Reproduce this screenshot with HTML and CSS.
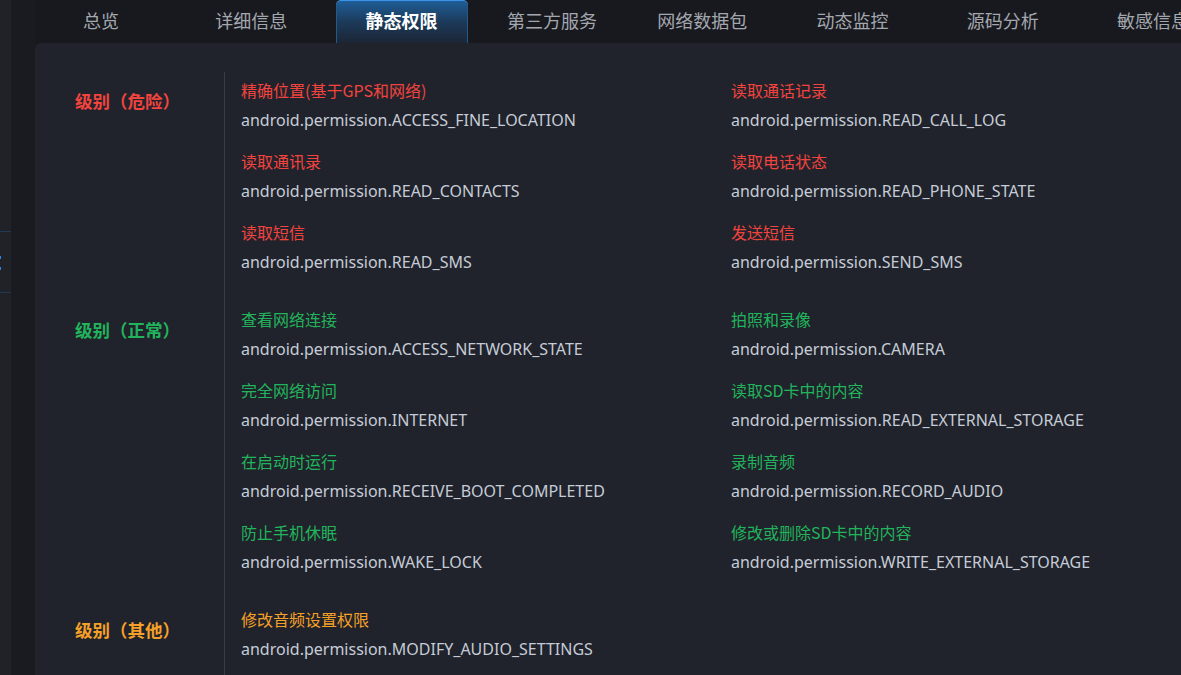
FILE: index.html
```html
<!DOCTYPE html>
<html lang="zh-CN">
<head>
<meta charset="utf-8">
<title>静态权限</title>
<link rel="stylesheet" href="styles.css">
</head>
<body>
<div class="app">
  <div class="rail">
    <div class="rail-line rail-line-top"></div>
    <div class="rail-dot"></div>
    <div class="rail-dot"></div>
    <div class="rail-line rail-line-bottom"></div>
  </div>
  <div class="gutter"></div>
  <div class="main">
    <nav class="tabs">
      <div class="tab">总览</div>
      <div class="tab">详细信息</div>
      <div class="tab active">静态权限</div>
      <div class="tab">第三方服务</div>
      <div class="tab">网络数据包</div>
      <div class="tab">动态监控</div>
      <div class="tab">源码分析</div>
      <div class="tab">敏感信息</div>
    </nav>
    <div class="panel">
      <section class="level danger">
        <div class="level-label">级别（危险）</div>
        <div class="items">
          <div class="item"><div class="title">精确位置(基于GPS和网络)</div><div class="value">android.permission.ACCESS_FINE_LOCATION</div></div>
          <div class="item"><div class="title">读取通话记录</div><div class="value">android.permission.READ_CALL_LOG</div></div>
          <div class="item"><div class="title">读取通讯录</div><div class="value">android.permission.READ_CONTACTS</div></div>
          <div class="item"><div class="title">读取电话状态</div><div class="value">android.permission.READ_PHONE_STATE</div></div>
          <div class="item"><div class="title">读取短信</div><div class="value">android.permission.READ_SMS</div></div>
          <div class="item"><div class="title">发送短信</div><div class="value">android.permission.SEND_SMS</div></div>
        </div>
      </section>
      <section class="level normal">
        <div class="level-label">级别（正常）</div>
        <div class="items">
          <div class="item"><div class="title">查看网络连接</div><div class="value">android.permission.ACCESS_NETWORK_STATE</div></div>
          <div class="item"><div class="title">拍照和录像</div><div class="value">android.permission.CAMERA</div></div>
          <div class="item"><div class="title">完全网络访问</div><div class="value">android.permission.INTERNET</div></div>
          <div class="item"><div class="title">读取SD卡中的内容</div><div class="value">android.permission.READ_EXTERNAL_STORAGE</div></div>
          <div class="item"><div class="title">在启动时运行</div><div class="value">android.permission.RECEIVE_BOOT_COMPLETED</div></div>
          <div class="item"><div class="title">录制音频</div><div class="value">android.permission.RECORD_AUDIO</div></div>
          <div class="item"><div class="title">防止手机休眠</div><div class="value">android.permission.WAKE_LOCK</div></div>
          <div class="item"><div class="title">修改或删除SD卡中的内容</div><div class="value">android.permission.WRITE_EXTERNAL_STORAGE</div></div>
        </div>
      </section>
      <section class="level other">
        <div class="level-label">级别（其他）</div>
        <div class="items">
          <div class="item"><div class="title">修改音频设置权限</div><div class="value">android.permission.MODIFY_AUDIO_SETTINGS</div></div>
        </div>
      </section>
    </div>
  </div>
</div>
</body>
</html>
```

FILE: styles.css
```css
* { box-sizing: border-box; }
html, body {
  margin: 0;
  padding: 0;
  height: 100%;
  overflow: hidden;
  background: #18191e;
  font-family: "Noto Sans", "Noto Sans CJK SC", sans-serif;
}
.app {
  display: flex;
  height: 675px;
}
.rail {
  width: 11px;
  flex: none;
  background: #202228;
  padding-top: 231px;
  display: flex;
  flex-direction: column;
}
.rail-line {
  height: 1px;
  background: #1f3a52;
}
.rail-line-top { margin-bottom: 24px; }
.rail-dot {
  width: 1px;
  height: 3px;
  background: #2a8ae0;
  margin-bottom: 8px;
}
.rail-line-bottom { margin-top: 14px; }
.gutter {
  width: 24px;
  flex: none;
  background: #1a1b20;
}
.main {
  flex: 1;
  display: flex;
  flex-direction: column;
  min-width: 0;
}
.tabs {
  height: 43px;
  flex: none;
  display: flex;
  gap: 18.3px;
  background: #18191e;
  white-space: nowrap;
}
.tab {
  width: 132px;
  flex: none;
  display: flex;
  align-items: center;
  justify-content: center;
  color: #a3a7ae;
  font-family: "Noto Sans CJK SC", sans-serif;
  font-size: 18px;
  padding-bottom: 4px;
}
.tab.active {
  color: #ffffff;
  font-weight: 700;
  border-radius: 5px 5px 0 0;
  border-top: 1px solid #3a95e8;
  background: linear-gradient(180deg, #1f5d97 0%, #1c3a5a 50%, #1c2635 100%);
  box-shadow: inset 1px 0 0 #245a8a, inset -1px 0 0 #245a8a;
}
.panel {
  flex: 1;
  background: #20232b;
  border-radius: 6px 0 0 0;
  padding-top: 29px;
}
.level {
  display: flex;
}
.level-label {
  width: 189px;
  flex: none;
  padding: 18px 0 0 40px;
  font-family: "Noto Sans CJK SC", sans-serif;
  font-size: 17.5px;
  font-weight: 700;
  line-height: 22px;
}
.items {
  flex: 1;
  border-left: 1px solid #393c45;
  padding: 7px 0 28px 16px;
  display: grid;
  grid-template-columns: 490px 1fr;
  row-gap: 19px;
}
.item {
  display: flex;
  flex-direction: column;
  gap: 8px;
}
.title {
  font-family: "Noto Sans CJK SC", sans-serif;
  font-size: 16px;
  line-height: 22px;
}
.value {
  font-size: 16px;
  line-height: 22px;
  color: #c6ccd7;
  white-space: nowrap;
}
.danger .level-label, .danger .title { color: #f2433f; }
.normal .level-label, .normal .title { color: #22b45c; }
.other .level-label, .other .title { color: #f5a028; }
```
